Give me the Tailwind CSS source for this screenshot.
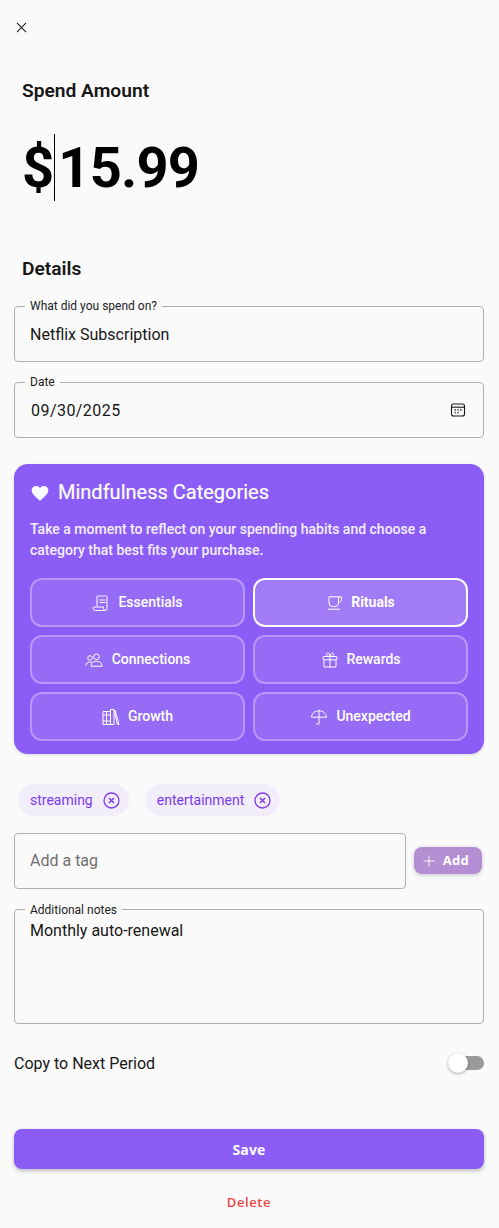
<!doctype html>
<html lang="en">
<head>
<meta charset="utf-8">
<script src="https://cdn.jsdelivr.net/npm/@tailwindcss/browser@4"></script>
<title>Spend</title>
</head>
<body class="bg-[#fafafa] font-['Roboto',sans-serif] text-[#171717]">
<div class="w-[499px] h-[1228px] overflow-hidden flex flex-col pl-[14px] pr-[15px]">
  <div class="h-[54px] flex items-center pl-[2px] shrink-0">
    <svg class="w-[11px] h-[11px]" viewBox="0 0 12 12" fill="none" stroke="#171717" stroke-width="1.1"><path d="M1 1l10 10M11 1L1 11"/></svg>
  </div>
  <h2 class="mt-[24px] ml-[8px] text-[19.2px] leading-[25px] font-semibold">Spend Amount</h2>
  <div class="mt-[30px] ml-[8px] h-[68px] flex items-center text-[56px] leading-[68px] font-bold text-black tracking-[-0.8px]">
    <span class="pt-[2px]">$</span><span class="w-px h-[67px] bg-black ml-[1px] mr-[3px]"></span><span class="pt-[2px]">15.99</span>
  </div>
  <h2 class="mt-[55px] ml-[8px] text-[19.2px] leading-[25px] font-semibold">Details</h2>

  <div class="mt-[25px] relative h-[56px] border border-[#b0b0b0] rounded-[4px] flex items-center pl-[15px] pr-[15px] pt-[2px] text-[16px]">
    <span class="absolute -top-[8px] left-[10px] px-[5px] bg-[#fafafa] text-[12px] leading-[14px] text-[#222]">What did you spend on?</span>
    Netflix Subscription
  </div>
  <div class="mt-[20px] relative h-[56px] border border-[#b0b0b0] rounded-[4px] flex items-center justify-between pl-[16px] pr-[17px] pt-[2px] text-[16px] tracking-[0.45px]">
    <span class="absolute -top-[8px] left-[10px] px-[5px] bg-[#fafafa] text-[12px] leading-[14px] tracking-normal text-[#222]">Date</span>
    <span>09/30/2025</span>
    <svg class="w-[16px] h-[16px] -mt-[2px]" viewBox="0 0 16 16" fill="none" stroke="#171717" stroke-width="1.1"><rect x="1.500" y="2" width="13" height="12" rx="2"/><path d="M1.500 5.200h13"/><path d="M4.600 8h1.200M7.400 8h1.200M10.200 8h1.200M4.600 10.600h1.200M7.400 10.600h1.200" stroke-width="1.400"/></svg>
  </div>

  <section class="mt-[26px] h-[290px] rounded-[14px] bg-[#8b5cf6] px-[16px] pt-[16px] text-white shadow-[0_1px_3px_rgba(0,0,0,0.15)]">
    <div class="flex items-center gap-[8px] h-[25px]">
      <svg class="w-[20px] h-[20px]" viewBox="0 0 24 24" fill="#fff"><path d="M12 21.400l-1.500-1.400C5.100 15.200 2 12.300 2 8.700 2 5.800 4.300 3.500 7.200 3.500c1.800 0 3.600.9 4.800 2.300 1.200-1.400 3-2.300 4.800-2.300 2.900 0 5.200 2.300 5.200 5.200 0 3.600-3.100 6.500-8.500 11.300z"/></svg>
      <h3 class="text-[20px] leading-[25px] font-normal [-webkit-text-stroke:0.2px_white]">Mindfulness Categories</h3>
    </div>
    <p class="mt-[14px] text-[14px] leading-[21px] font-medium text-white/90">Take a moment to reflect on your spending habits and choose a category that best fits your purchase.</p>
    <div class="mt-[17px] grid grid-cols-2 gap-x-[8px] gap-y-[8px]">
      <button class="h-[49px] rounded-[12px] border-2 border-white/30 bg-white/10 flex items-center justify-center gap-[8px] text-[14px] font-medium">
        <svg class="w-[18px] h-[18px]" viewBox="0 0 18 18" fill="none" stroke="#fff" stroke-width="1"><path d="M5 12V2.500l1-1 1 1 1-1 1 1 1-1 1 1 1-1 1 1 1-1 1 1v12a2 2 0 0 1-2 2H3.200a2 2 0 0 1-2-2v-.7c0-.5.4-.8.8-.8H11.500v1.500a2 2 0 0 0 2 2"/><path d="M7.500 6h6M7.500 8.500h6"/></svg>
        Essentials
      </button>
      <button class="h-[49px] rounded-[12px] border-2 border-white bg-white/20 flex items-center justify-center gap-[8px] pl-[1px] text-[14px] font-bold">
        <svg class="w-[16px] h-[16px]" viewBox="0 0 16 16" fill="none" stroke="#fff" stroke-width="1"><path d="M2 1.800h9.500V8a3.500 3.500 0 0 1-3.500 3.500H5.500A3.500 3.500 0 0 1 2 8z"/><path d="M11.500 1.800h3V5a1.800 1.800 0 0 1-3 1.300"/><path d="M1 14.200h12"/></svg>
        Rituals
      </button>
      <button class="h-[49px] rounded-[12px] border-2 border-white/30 bg-white/10 flex items-center justify-center gap-[9px] text-[14px] font-medium">
        <svg class="w-[18px] h-[18px]" viewBox="0 0 18 18" fill="none" stroke="#fff" stroke-width="1"><circle cx="5" cy="7" r="2.300"/><circle cx="11.500" cy="5.800" r="2.800"/><path d="M1 14.500c0-2.200 1.700-3.500 4-3.500 .6 0 1.200.1 1.700.3"/><path d="M6 14.500c0-2.500 2.500-4.300 5.500-4.300s5.500 1.800 5.500 4.300v.7H6z"/></svg>
        Connections
      </button>
      <button class="h-[49px] rounded-[12px] border-2 border-white/30 bg-white/10 flex items-center justify-center gap-[8px] pl-[2px] text-[14px] font-medium">
        <svg class="w-[16px] h-[16px]" viewBox="0 0 16 16" fill="none" stroke="#fff" stroke-width="1"><rect x="1" y="4.500" width="14" height="3.300" rx=".6"/><path d="M2 7.800V15h12V7.800M8 4.500V15"/><path d="M8 4.500C6 4.500 4.200 3.600 4.200 2.300 4.200 1.400 5 1 5.700 1 7 1 8 2.800 8 4.500zM8 4.500c2 0 3.800-.9 3.800-2.200C11.800 1.400 11 1 10.300 1 9 1 8 2.800 8 4.500z"/></svg>
        Rewards
      </button>
      <button class="h-[49px] rounded-[12px] border-2 border-white/30 bg-white/10 flex items-center justify-center gap-[8px] text-[14px] font-medium">
        <svg class="w-[18px] h-[18px]" viewBox="0 0 18 18" fill="none" stroke="#fff" stroke-width="1"><path d="M1 3.500h3.500v13H1zM4.500 3.500h4v13h-4zM1 7h7.500M1 13h7.500M8.500 1.500h3.500v15H8.500z"/><path d="M13 2l4 14.500h-1.500L13 6z"/></svg>
        Growth
      </button>
      <button class="h-[49px] rounded-[12px] border-2 border-white/30 bg-white/10 flex items-center justify-center gap-[9px] pl-[1px] text-[14px] font-medium">
        <svg class="w-[16px] h-[16px]" viewBox="0 0 16 16" fill="none" stroke="#fff" stroke-width="1"><path d="M.5 8.200C.9 4.300 4.100 1.800 8 1.800s7.100 2.500 7.500 6.400H.5z"/><path d="M8 1v13.200a1.300 1.300 0 0 1-2.600 0"/></svg>
        Unexpected
      </button>
    </div>
  </section>

  <div class="mt-[30px] ml-[4px] flex gap-[16px]">
    <span class="h-[32px] pl-[12px] pr-[9px] rounded-full bg-[#f2edfb] text-[#7c3aed] text-[14px] flex items-center gap-[10px]">streaming
      <svg class="w-[17px] h-[17px]" viewBox="0 0 17 17" fill="none" stroke="#7c3aed"><circle cx="8.500" cy="8.500" r="7.500" stroke-width="1.300"/><path d="M6 6l5 5M11 6l-5 5" stroke-width="1.500"/></svg>
    </span>
    <span class="h-[32px] pl-[12px] pr-[9px] rounded-full bg-[#f2edfb] text-[#7c3aed] text-[14px] flex items-center gap-[10px]">entertainment
      <svg class="w-[17px] h-[17px]" viewBox="0 0 17 17" fill="none" stroke="#7c3aed"><circle cx="8.500" cy="8.500" r="7.500" stroke-width="1.300"/><path d="M6 6l5 5M11 6l-5 5" stroke-width="1.500"/></svg>
    </span>
  </div>

  <div class="mt-[17px] flex items-center gap-[8px]">
    <div class="w-[392px] h-[56px] border border-[#b0b0b0] rounded-[4px] flex items-center px-[15px] text-[16px] text-[#6f6f6f]">Add a tag</div>
    <button class="w-[68px] h-[27px] mb-[1px] rounded-[8px] bg-[#b38ed3] text-white font-['Open_Sans',sans-serif] text-[13px] font-bold tracking-[0.3px] flex items-center justify-center gap-[8px] pr-[4px] shadow-[0_1px_4px_rgba(0,0,0,0.2)]">
      <svg class="w-[12px] h-[12px]" viewBox="0 0 13 13" fill="none" stroke="#fff" stroke-width="1"><path d="M6.500 .5v12M.5 6.500h12"/></svg>
      Add
    </button>
  </div>

  <div class="mt-[20px] relative h-[115px] border border-[#b0b0b0] rounded-[4px] px-[15px] pt-[11px] text-[16px] leading-[20px]">
    <span class="absolute -top-[7px] left-[10px] px-[5px] bg-[#fafafa] text-[12px] leading-[14px] text-[#222]">Additional notes</span>
    Monthly auto-renewal
  </div>

  <div class="mt-[27px] h-[24px] flex items-center justify-between text-[16px]">
    <span class="pt-[2px]">Copy to Next Period</span>
    <span class="relative w-[35px] h-[14px] rounded-full bg-[#9a9a9a]">
      <span class="absolute -left-[1px] -top-[3px] w-[20px] h-[20px] rounded-full bg-white shadow-[0_1px_3px_rgba(0,0,0,0.35)]"></span>
    </span>
  </div>

  <button class="mt-[54px] h-[40px] w-full shrink-0 rounded-[8px] bg-[#8b5cf6] text-white font-['Open_Sans',sans-serif] text-[14px] font-bold tracking-[0.2px] shadow-[0_2px_4px_rgba(0,0,0,0.25)]">Save</button>
  <button class="mt-[24px] h-[20px] w-full shrink-0 text-[#ef4444] font-['Open_Sans',sans-serif] text-[13px] font-semibold tracking-[0.6px]">Delete</button>
</div>
</body>
</html>
